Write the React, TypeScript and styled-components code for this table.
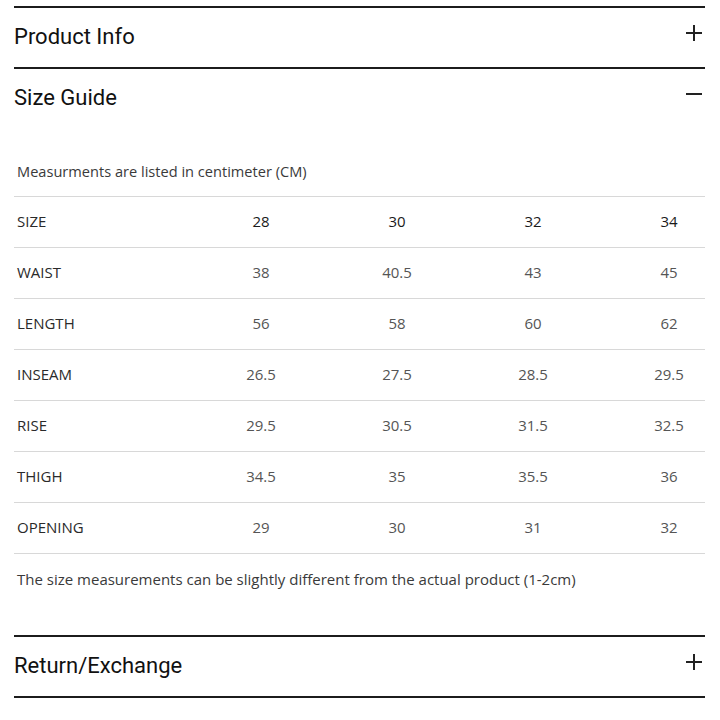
import React from 'react';
import styled, { createGlobalStyle } from 'styled-components';

const GlobalStyle = createGlobalStyle`
  body {
    margin: 0;
    background: #ffffff;
  }
`;

const columns = ['28', '30', '32', '34'];

const rows: { label: string; values: string[] }[] = [
  { label: 'WAIST', values: ['38', '40.5', '43', '45'] },
  { label: 'LENGTH', values: ['56', '58', '60', '62'] },
  { label: 'INSEAM', values: ['26.5', '27.5', '28.5', '29.5'] },
  { label: 'RISE', values: ['29.5', '30.5', '31.5', '32.5'] },
  { label: 'THIGH', values: ['34.5', '35', '35.5', '36'] },
  { label: 'OPENING', values: ['29', '30', '31', '32'] },
];

const ToggleIcon = ({ open }: { open?: boolean }) => (
  <IconBox width="16" height="16" viewBox="0 0 16 16">
    <path d="M0 8h16" stroke="#222" strokeWidth="2" />
    {!open && <path d="M8 0v16" stroke="#222" strokeWidth="2" />}
  </IconBox>
);

interface SectionProps {
  title: string;
  open?: boolean;
  last?: boolean;
  children?: React.ReactNode;
}

const Section = ({ title, open = false, last = false, children }: SectionProps) => (
  <SectionBox last={last}>
    <Header>
      <Title>{title}</Title>
      <ToggleIcon open={open} />
    </Header>
    {open && children}
  </SectionBox>
);

const App = () => (
  <>
    <GlobalStyle />
    <Page>
      <Section title="Product Info" />
      <Section title="Size Guide" open>
        <Body>
          <Caption>Measurments are listed in centimeter (CM)</Caption>
          <Table>
            <Row>
              <Label>SIZE</Label>
              {columns.map((c) => (
                <Cell key={c} head>
                  {c}
                </Cell>
              ))}
            </Row>
            {rows.map((r) => (
              <Row key={r.label}>
                <Label>{r.label}</Label>
                {r.values.map((v, i) => (
                  <Cell key={i}>{v}</Cell>
                ))}
              </Row>
            ))}
          </Table>
          <Note>
            The size measurements can be slightly different from the actual
            product (1-2cm)
          </Note>
        </Body>
      </Section>
      <Section title="Return/Exchange" last />
    </Page>
  </>
);

const Page = styled.div`
  padding: 6px 15px 0 14px;
  width: 720px;
  box-sizing: border-box;
`;

const SectionBox = styled.div<{ last?: boolean }>`
  border-top: 2px solid #1c1c1c;
  border-bottom: ${({ last }) => (last ? '2px solid #1c1c1c' : 'none')};
`;

const Header = styled.div`
  height: 59px;
  display: flex;
  align-items: center;
  justify-content: space-between;
  padding-right: 3px;
`;

const Title = styled.span`
  font-family: Roboto, 'Noto Sans', sans-serif;
  font-size: 22px;
  color: #111;
  margin-top: -2px;
`;

const IconBox = styled.svg`
  margin-bottom: 10px;
  flex-shrink: 0;
`;

const Body = styled.div`
  padding-bottom: 46px;
`;

const Caption = styled.div`
  font-family: 'Open Sans', 'Noto Sans', sans-serif;
  font-size: 14.6px;
  line-height: 20px;
  color: #3a3a3a;
  padding: 33px 0 15px 3px;
`;

const Table = styled.div`
  border-top: 1px solid #d8d8d8;
`;

const Row = styled.div`
  display: grid;
  grid-template-columns: 179px repeat(4, 136px);
  align-items: center;
  height: 48px;
  padding-bottom: 2px;
  border-bottom: 1px solid #d8d8d8;
`;

const Label = styled.div`
  font-family: 'Open Sans', 'Noto Sans', sans-serif;
  font-size: 15px;
  color: #2a2a2a;
  padding-left: 3px;
`;

const Cell = styled.div<{ head?: boolean }>`
  font-family: 'Open Sans', 'Noto Sans', sans-serif;
  font-size: 15px;
  text-align: center;
  color: ${({ head }) => (head ? '#1a1a1a' : '#555')};
  font-weight: ${({ head }) => (head ? 500 : 400)};
`;

const Note = styled.div`
  font-family: 'Open Sans', 'Noto Sans', sans-serif;
  font-size: 15px;
  line-height: 20px;
  color: #3a3a3a;
  padding: 15px 0 0 3px;
`;

export default App;
